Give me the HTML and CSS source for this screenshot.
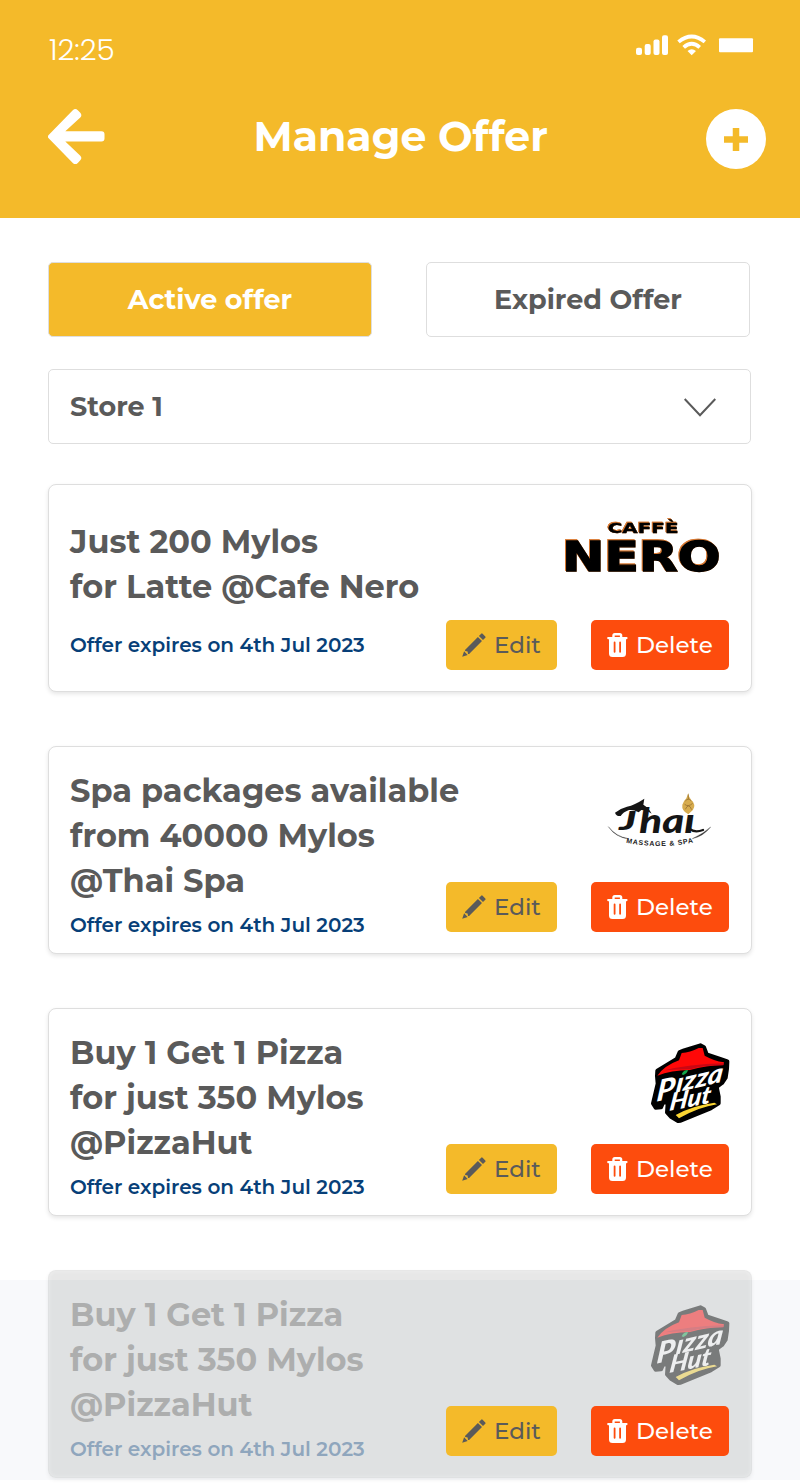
FILE: index.html
```html
<!DOCTYPE html>
<html lang="en">
<head>
<meta charset="utf-8">
<title>Manage Offer</title>
<link rel="stylesheet" href="styles.css">
</head>
<body>
<svg class="symbols" aria-hidden="true">
  <symbol id="pencil" viewBox="0 0 24 24">
    <path d="M.2 23.8 2.1 18.3 5.7 21.9ZM3 16.9 15.9 4 20 8.1 7.1 21 6 20.9 5.6 18.5 3.2 18ZM16.9 3 19.2.7Q19.9 0 20.6.7L23.3 3.4Q24 4.1 23.3 4.8L21 7.1Z"/>
  </symbol>
  <symbol id="trash" viewBox="0 0 21 24">
    <path fill-rule="evenodd" d="M5.3 4V2.5Q5.3 0 7.8 0H12.8Q15.3 0 15.3 2.5V4H19.6Q20.6 4 20.6 5T19.6 6.2H19V20.5Q19 24 15.5 24H5.5Q2 24 2 20.5V6.2H1.2Q.2 6.2 .2 5T1.2 4ZM7.7 4H12.9V2.6H7.7ZM6.7 9.5V18.8Q6.7 19.8 7.6 19.8T8.5 18.8V9.5Q8.5 8.6 7.6 8.6T6.7 9.5ZM12.2 9.5V18.8Q12.2 19.8 13.1 19.8T14 18.8V9.5Q14 8.6 13.1 8.6T12.2 9.5Z"/>
  </symbol>
  <symbol id="pizza-hut" viewBox="55 35 245 245">
    <path class="pizza-edge" d="M79 137 80 121 138 86 147 65 160 60 209 45 220 51 228 72 275 88 290 93 289 115 285 142 274 158 258 170 264 199 264 219 240 234 150 271 142 272 122 260 109 246 111 218 98 215 91 231 75 232 67 219 81 160Z"/>
    <path class="pizza-roof" d="M80 136Q101 106 145 90L153 68Q178 66 204 53L216 53 222 76Q249 91 280 96L278 104Q225 105 178 119 121 120 80 136Z"/>
    <path class="pizza-shade" d="M102 120Q174 102 278 99V105Q214 105 182 116 140 117 102 120Z"/>
    <path class="pizza-leaf" d="M153 132Q158 119 172 119 170 129 158 134Z"/>
    <g class="pizza-type">
      <text transform="translate(76 214) skewY(-12) skewX(-6)" font-size="88" textLength="54" lengthAdjust="spacingAndGlyphs">P</text>
      <text transform="translate(134 187) skewY(-13) skewX(-8)" font-size="78" textLength="140" lengthAdjust="spacingAndGlyphs">ızza</text>
      <text transform="translate(114 242) skewY(-11) skewX(-8)" font-size="72" textLength="124" lengthAdjust="spacingAndGlyphs">Hut</text>
    </g>
    <path class="pizza-line" d="M135 254Q184 226 251 217L259 222Q205 230 145 264Z"/>
  </symbol>
</svg>

<header class="header">
  <div class="status">
    <span class="clock">12:25</span>
    <svg class="status-icons" viewBox="0 0 118 22" aria-hidden="true">
      <rect x="0" y="13.7" width="6" height="7.3" rx="2"/>
      <rect x="8.7" y="10" width="6" height="11" rx="2"/>
      <rect x="17.5" y="5.5" width="6" height="15.5" rx="2"/>
      <rect x="26" y="1.2" width="6" height="19.8" rx="2"/>
      <path d="M41.3 6.5Q55.7-5.3 70 6.5L67.6 9.2Q55.7-.4 43.7 9.2ZM46.4 11.9Q55.7 3.8 65 11.9L62.4 14.7Q55.7 9 49 14.7ZM51.5 17Q55.7 13.3 60 17L55.7 21.2Z"/>
      <rect x="83" y="4.2" width="34" height="14" rx="1"/>
    </svg>
  </div>
  <div class="titlebar">
    <svg class="back" viewBox="0 0 58 56" aria-label="Back">
      <path d="M.4 26.2 24.8 1.2Q27.3-1.2 29.8 1.2L32.3 3.8Q34.4 6.2 32.3 8.4L17.3 22.3H53.5Q56.5 22.3 56.5 25.3V29.5Q56.5 32.5 53.5 32.5H17.3L32.3 46.8Q34.4 49.1 32.3 51.3L29.8 53.9Q27.3 56.3 24.8 53.9L.4 29Q-.6 27.6 .4 26.2Z"/>
    </svg>
    <h1 class="title">Manage Offer</h1>
    <svg class="add" viewBox="0 0 60 60" aria-label="Add offer">
      <circle cx="30" cy="30" r="30"/>
      <path d="M18 30.5H42M30 19V42"/>
    </svg>
  </div>
</header>

<main class="content">
  <nav class="tabs">
    <button class="tab tab-active">Active offer</button>
    <button class="tab">Expired Offer</button>
  </nav>
  <div class="select">
    <span>Store 1</span>
    <svg class="chevron" viewBox="0 0 32 19" aria-hidden="true"><path d="M.7 1 16 17.2 31.3 1"/></svg>
  </div>

  <section class="offers">
    <article class="card card-short">
      <div class="info">
        <h2 class="name">Just 200 Mylos<br>for Latte @Cafe Nero</h2>
        <p class="expires">Offer expires on 4th Jul 2023</p>
      </div>
      <div class="side">
        <svg class="logo logo-nero" viewBox="70 75 475 180" role="img">
          <text class="caffe" x="204" y="129" font-size="44" textLength="213" lengthAdjust="spacingAndGlyphs">CAFFÈ</text>
          <text class="nero" x="68" y="244" font-size="122" textLength="475" lengthAdjust="spacingAndGlyphs">NERO</text>
        </svg>
        <div class="actions">
          <button class="btn edit"><svg><use href="#pencil"/></svg><span>Edit</span></button>
          <button class="btn delete"><svg><use href="#trash"/></svg><span>Delete</span></button>
        </div>
      </div>
    </article>

    <article class="card">
      <div class="info">
        <h2 class="name">Spa packages available<br>from 40000 Mylos<br>@Thai Spa</h2>
        <p class="expires">Offer expires on 4th Jul 2023</p>
      </div>
      <div class="side">
        <svg class="logo logo-thai" viewBox="60 30 360 180" role="img">
          <defs><path id="spa-arc" d="M138 188Q240 209 342 187"/></defs>
          <path class="thai-roof" d="M105 98Q124 84 141 80 164 75 193 56L190 74Q206 83 215 101 198 90 184 90L176 97Q160 88 147 90 129 96 122 108 109 110 105 98Z"/>
          <g class="thai-type">
            <text x="117" y="151" font-size="82" textLength="52" lengthAdjust="spacingAndGlyphs">J</text>
            <text x="178" y="158" font-size="100" textLength="166" lengthAdjust="spacingAndGlyphs">haı</text>
          </g>
          <path class="thai-tail" d="M328 146Q344 160 369 150"/>
          <path class="thai-swoosh" d="M85 140Q107 169 145 176 108 173 85 140ZM392 141Q370 169 337 176 370 161 392 141Z"/>
          <path class="thai-flame" d="M325 39Q325 53 339 65 349 82 333 95L325 103Q304 92 307 74 310 64 319 55Z"/>
          <path class="thai-detail" d="M325 43V58M316 63Q325 52 334 63M314 73Q325 82 338 70M316 88Q326 67 335 89"/>
          <text class="thai-sub" font-size="21"><textPath href="#spa-arc" textLength="203">MASSAGE &amp; SPA</textPath></text>
        </svg>
        <div class="actions">
          <button class="btn edit"><svg><use href="#pencil"/></svg><span>Edit</span></button>
          <button class="btn delete"><svg><use href="#trash"/></svg><span>Delete</span></button>
        </div>
      </div>
    </article>

    <article class="card">
      <div class="info">
        <h2 class="name">Buy 1 Get 1 Pizza<br>for just 350 Mylos<br>@PizzaHut</h2>
        <p class="expires">Offer expires on 4th Jul 2023</p>
      </div>
      <div class="side">
        <svg class="logo logo-pizza" role="img"><use href="#pizza-hut"/></svg>
        <div class="actions">
          <button class="btn edit"><svg><use href="#pencil"/></svg><span>Edit</span></button>
          <button class="btn delete"><svg><use href="#trash"/></svg><span>Delete</span></button>
        </div>
      </div>
    </article>

    <article class="card card-disabled">
      <div class="info">
        <h2 class="name">Buy 1 Get 1 Pizza<br>for just 350 Mylos<br>@PizzaHut</h2>
        <p class="expires">Offer expires on 4th Jul 2023</p>
      </div>
      <div class="side">
        <svg class="logo logo-pizza" role="img"><use href="#pizza-hut"/></svg>
        <div class="actions">
          <button class="btn edit"><svg><use href="#pencil"/></svg><span>Edit</span></button>
          <button class="btn delete"><svg><use href="#trash"/></svg><span>Delete</span></button>
        </div>
      </div>
    </article>
  </section>
</main>
</body>
</html>
```
FILE: styles.css
```css
* { box-sizing: border-box; }
body {
  margin: 0;
  width: 800px;
  height: 1484px;
  overflow: hidden;
  font-family: Montserrat, Inter, "Liberation Sans", sans-serif;
  color: #5a5a5a;
  background: linear-gradient(#fff 1280px, #f8f9fb 1280px, #f8f9fb 1480px, #fff 1480px);
}
h1, h2, p { margin: 0; }
button { font: inherit; color: inherit; padding: 0; }
.symbols { display: none; }

.header { height: 218px; padding: 30px 34px 0 48px; background: #f4ba2a; color: #fff; }
.status { display: flex; justify-content: space-between; height: 38px; padding-right: 12px; }
.clock { margin-left: 1px; font-family: Poppins, Roboto, sans-serif; font-weight: 300; font-size: 29.5px; line-height: 40px; letter-spacing: -.1px; }
.status-icons { width: 118px; height: 22px; margin-top: 4px; fill: #fff; }
.titlebar { display: flex; margin-top: 41px; }
.back { width: 58px; height: 56px; fill: #fff; }
.title { margin-left: 147.5px; font-size: 41px; line-height: 55px; font-weight: 700; white-space: nowrap; }
.add { width: 60px; height: 60px; margin-left: auto; fill: #fff; }
.add path { stroke: #f4ba2a; stroke-width: 6.5; }

.content { padding: 44px 48px 0; }
.tabs { display: flex; gap: 54px; }
.tab { width: 324px; height: 75px; border: 1px solid #dedede; border-radius: 5px; background: #fff; font-size: 27px; font-weight: 700; }
.tab-active { background: #f4ba2a; color: #fff; }
.select { display: flex; align-items: center; justify-content: space-between; width: 703px; height: 75px; margin-top: 32px; padding: 0 34px 0 21px; border: 1px solid #dedede; border-radius: 5px; font-size: 27px; font-weight: 700; }
.chevron { width: 32px; height: 19px; margin-top: 1px; fill: none; stroke: #5a5a5a; stroke-width: 2; }

.offers { display: flex; flex-direction: column; gap: 54px; margin-top: 40px; }
.card { display: flex; justify-content: space-between; flex: none; height: 208px; width: 704px; padding: 0 22px 0 21px; background: #fff; border: 1px solid #dedede; border-radius: 8px; box-shadow: 0 2px 4px rgba(0, 0, 0, .1); }
.info { width: 376px; padding-top: 21px; white-space: nowrap; }
.name { font-size: 32px; line-height: 45px; font-weight: 700; }
.expires { margin-top: 7px; color: #073f78; font-size: 20px; font-weight: 600; line-height: 30px; }
.card-short .info { padding-top: 34px; }
.card-short .expires { margin-top: 21px; }
.side { width: 283px; }
.logo { display: block; overflow: visible; }
.logo-nero { width: 158.3px; height: 60px; margin: 30px 7.4px 45px auto; font-family: "DejaVu Sans", sans-serif; font-weight: 700; stroke: #000; filter: drop-shadow(.6px .6px 0 #d97a33) drop-shadow(-.6px -.6px 0 #d97a33); }
.logo-thai { width: 120px; height: 60px; margin: 43px 9px 32px auto; }
.logo-pizza { width: 81.7px; height: 81.7px; margin: 32.7px -1.3px 20.6px auto; }
.caffe { stroke-width: 1; }
.nero { stroke-width: 4; }
.thai-roof { fill: #151515; }
.thai-type { font-family: Lato, sans-serif; font-weight: 900; font-style: italic; fill: #151515; }
.thai-tail { fill: none; stroke: #151515; stroke-width: 7; stroke-linecap: round; }
.thai-swoosh { fill: #333; stroke: #333; }
.thai-flame { fill: #d7ac4f; }
.thai-detail { fill: none; stroke: #8b652b; stroke-width: 2; }
.thai-sub { font-family: "Liberation Sans", sans-serif; font-weight: 700; fill: #222; }
.pizza-edge { fill: #000; stroke: #000; stroke-width: 12; stroke-linejoin: round; }
.pizza-roof { fill: #ff0808; }
.pizza-shade { fill: #c90714; }
.pizza-leaf { fill: #12a64b; }
.pizza-type { font-family: Lato, sans-serif; font-style: italic; font-weight: 900; fill: #fff; }
.pizza-line { fill: #fbd532; }

.actions { display: flex; justify-content: space-between; }
.btn { display: flex; align-items: center; height: 50px; border: 0; border-radius: 5px; font-size: 23px; font-weight: 500; }
.btn svg { height: 24px; fill: currentColor; }
.edit { width: 111px; padding-left: 16px; background: #f4ba2a; gap: 8px; }
.edit svg { width: 24px; }
.delete { width: 138px; padding-left: 16px; background: #fd4c0d; color: #fff; gap: 8px; }
.delete svg { width: 21px; }

.card-disabled { border-color: transparent; background: linear-gradient(#e7e7e7 10px, #dfe1e2 10px) border-box; box-shadow: 0 2px 4px rgba(0, 0, 0, .06), inset 0 0 4px rgba(255, 255, 255, .35); }
.card-disabled .name { color: #adaeae; }
.card-disabled .expires { color: #8fa6bd; }
.card-disabled .logo { opacity: .45; }
```
